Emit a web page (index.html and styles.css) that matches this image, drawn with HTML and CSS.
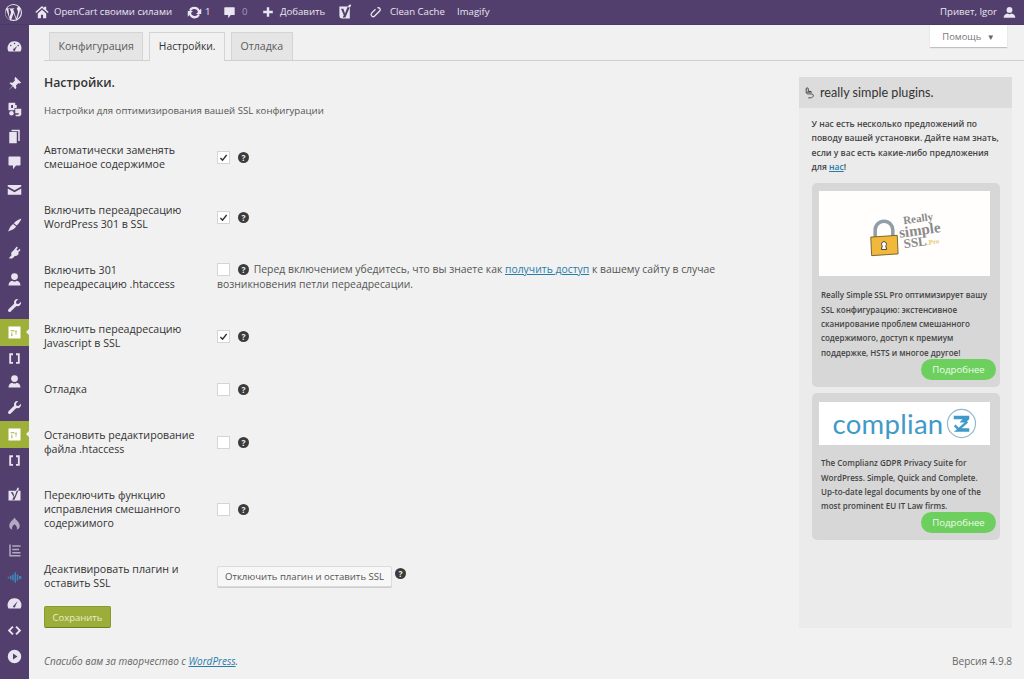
FILE: index.html
```html
<!DOCTYPE html>
<html lang="ru">
<head>
<meta charset="utf-8">
<title>Настройки</title>
<link rel="stylesheet" href="styles.css">
</head>
<body>
<header class="adminbar">
  <div class="bar-left">
    <svg class="ic wp" viewBox="0 0 20 20"><path fill-rule="evenodd" d="M10 1a9 9 0 1 0 0 18 9 9 0 0 0 0-18zm0 1a8 8 0 0 1 5.4 2.1c-1.300-.1-2.200 1.200-1.700 2.400.4.900 1 1.600 1 3 0 1-.4 2.100-.8 3.400l-1 3.200-3.300-9.800.9-.1c.4-.1.4-.7 0-.6l-2.600.1-2.500-.1c-.5 0-.5.6-.1.600l.9.1 1.300 3.500-1.800 5.500L4.600 6.100l1-.1c.4-.1.400-.7 0-.6l-2.300.1A8 8 0 0 1 10 2zM2.400 7.200l3.900 10.700A8 8 0 0 1 2.400 7.200zm7.700 3.400l2.400 6.600.1.100a8 8 0 0 1-4.900.1zm6.700-4.300a8 8 0 0 1-2.900 10.600l2.400-7c.4-1.100.6-2.100.5-3.600z"/></svg>
    <svg class="ic home" viewBox="0 0 20 20"><path d="M10 1.500L0.500 10l1.300 1.400L10 4.200l8.200 7.200 1.300-1.400L16 6.900V2.500h-3v1.800zM4 12v7h4.500v-5h3v5H16v-7l-6-5.200z"/></svg>
    <span class="site">OpenCart своими силами</span>
    <svg class="ic upd" viewBox="0 0 20 20"><path d="M10 2.500a7.500 7.500 0 0 1 6.700 4.100L19 4.500V12h-7l2.700-2.600A5 5 0 0 0 5.300 8L2.800 6.900A7.500 7.500 0 0 1 10 2.500zM1 8h7l-2.700 2.600a5 5 0 0 0 9.400 1.400l2.500 1.100a7.500 7.500 0 0 1-13.900.3L1 15.500z"/></svg>
    <span class="num">1</span>
    <svg class="ic cmt" viewBox="0 0 20 20"><path d="M3 2h14a1 1 0 0 1 1 1v10a1 1 0 0 1-1 1h-5l-4 5v-5H3a1 1 0 0 1-1-1V3a1 1 0 0 1 1-1z"/></svg>
    <span class="num dim">0</span>
    <svg class="ic plus" viewBox="0 0 20 20"><path d="M8 2h4v6h6v4h-6v6H8v-6H2V8h6z"/></svg>
    <span class="add">Добавить</span>
    <svg class="ic yoast" viewBox="0 0 20 20"><path d="M3 3h11l1-2h3l-2 4v13H6a3 3 0 0 1-3-3z"/><path class="yv" d="M5 6h3l2 6 3-8h3l-5.500 13H7l1.500-3z"/></svg>
    <svg class="ic clip" viewBox="0 0 20 20"><path d="M13 3a3 3 0 0 1 4 4l-9 9a3 3 0 0 1-4-1 3 3 0 0 1 0-4l6-6" fill="none" stroke="currentColor" stroke-width="2"/></svg>
    <span class="cache">Clean Cache</span>
    <span class="imagify">Imagify</span>
  </div>
  <div class="bar-right">
    <span>Привет, Igor</span>
    <svg class="ic user" viewBox="0 0 20 20"><circle cx="10" cy="6" r="4.500"/><path d="M1 18c0-4 3-6 6-6.500 2 1.500 4 1.500 6 0 3 .5 6 2.500 6 6.500z"/></svg>
  </div>
</header>

<div class="shell">
  <nav class="menu">
    <div class="mi"><svg viewBox="0 0 20 20"><path fill-rule="evenodd" d="M10 3a9 9 0 0 0-8 13.500h16A9 9 0 0 0 10 3zm0 2a1 1 0 1 1 0 2 1 1 0 0 1 0-2zM5 7.500a1 1 0 1 1 0 2 1 1 0 0 1 0-2zm10 0a1 1 0 1 1 0 2 1 1 0 0 1 0-2zm-1 1.500l-3 4.500a1.500 1.500 0 1 1-1.500-.7z"/></svg></div>
    <div class="mi sep"><svg viewBox="0 0 20 20"><path d="M11 1l8 8-2.500 1-1.500-.5-3 3 .5 3.500-1.500 1.500-3-4-6 5.500 5.500-6-4-3L4 8.500l3.500.5 3-3L10 3.500z"/></svg></div>
    <div class="mi"><svg viewBox="0 0 20 20"><path fill-rule="evenodd" d="M3 1h8v3h2v4h-3v3H2V2a1 1 0 0 1 1-1zm2.500 3v4h2.500V4zM11 9h8v8l-2 2h-5l-1-2h4l1-2h-5z"/><circle cx="6" cy="15" r="3"/></svg></div>
    <div class="mi"><svg viewBox="0 0 20 20"><path d="M6 1h11v15h-2V3H6z"/><path d="M3 4h10v15H3z"/></svg></div>
    <div class="mi"><svg viewBox="0 0 20 20"><path d="M3 2h14a1 1 0 0 1 1 1v10a1 1 0 0 1-1 1h-5l-4 5v-5H3a1 1 0 0 1-1-1V3a1 1 0 0 1 1-1z"/></svg></div>
    <div class="mi"><svg viewBox="0 0 20 20"><path d="M1 4h18v2l-9 5-9-5z"/><path d="M1 8.500l9 5 9-5V17H1z"/></svg></div>
    <div class="mi sep"><svg viewBox="0 0 20 20"><path d="M19 1c0 2-3 6-6 9L9 7c3-3 8-6 10-6zM8 8l4 3-1 2c-2 2-5 3-10 5 2-2 2-5 4-7z"/></svg></div>
    <div class="mi"><svg viewBox="0 0 20 20"><path d="M13 2l1.500 1.500-2 2.500 2 1.500L16.500 5 18 6.500l-3 3.500.5 1c0 2-2 4-5 3.500L7 18l-4 0 0-1 3-3.500C5 11 6 9 8 8z"/></svg></div>
    <div class="mi"><svg viewBox="0 0 20 20"><circle cx="10" cy="6" r="4.500"/><path d="M2 18c0-4 2-6 5-6.500 2 1.500 4 1.500 6 0 3 .5 5 2.500 5 6.500z"/></svg></div>
    <div class="mi"><svg viewBox="0 0 20 20"><path d="M14 1.500a4.500 4.500 0 0 0-4.500 6L2 15a2 2 0 0 0 3 3l7.500-7.500a4.500 4.500 0 0 0 6-5.500L15.500 8 12.500 7.500 12 4.500l3-3z"/></svg></div>
    <div class="mi on"><svg viewBox="0 0 20 20"><path fill-rule="evenodd" d="M2 2h16v16H2zm3 5v1.200h5V7zm7 0l-1.500 2h1v4h1V9h1zM6 10v3H5l1.500 2L8 13H7v-3z"/></svg></div>
    <div class="mi"><svg viewBox="0 0 20 20"><path d="M3 3h5v2.500H5.500v9H8V17H3zM12 3h5v14h-5v-2.500h2.500v-9H12z"/></svg></div>
    <div class="mi tight"><svg viewBox="0 0 20 20"><circle cx="10" cy="6" r="4.500"/><path d="M2 18c0-4 2-6 5-6.500 2 1.500 4 1.500 6 0 3 .5 5 2.500 5 6.500z"/></svg></div>
    <div class="mi"><svg viewBox="0 0 20 20"><path d="M14 1.500a4.500 4.500 0 0 0-4.500 6L2 15a2 2 0 0 0 3 3l7.500-7.500a4.500 4.500 0 0 0 6-5.500L15.500 8 12.500 7.500 12 4.500l3-3z"/></svg></div>
    <div class="mi on"><svg viewBox="0 0 20 20"><path fill-rule="evenodd" d="M2 2h16v16H2zm3 5v1.200h5V7zm7 0l-1.500 2h1v4h1V9h1zM6 10v3H5l1.500 2L8 13H7v-3z"/></svg></div>
    <div class="mi"><svg viewBox="0 0 20 20"><path d="M3 3h5v2.500H5.500v9H8V17H3zM12 3h5v14h-5v-2.500h2.500v-9H12z"/></svg></div>
    <div class="mi sep-low"><svg viewBox="0 0 20 20"><path d="M2 5h10l2-4h2l-1 4h3v13H2z"/><path class="mv" d="M5 7h3l2 6 3-8h2l-5 12H7l2-4z"/></svg></div>
    <div class="mi wide"><svg class="dimmed" viewBox="0 0 20 20"><path d="M10 2c1 3 7 6 7 11 0 3-2 5-4 5 1-2 0-5-3-7-3 2-4 5-3 7-2 0-4-2-4-5 0-5 6-8 7-11z"/></svg></div>
    <div class="mi"><svg class="dimmed" viewBox="0 0 20 20"><path d="M3 2h2v16H3zM7 3h11v2H7zM7 7.500h9v2H7zM7 12h11v2H7zM5 16h13v2H5z"/></svg></div>
    <div class="mi"><svg class="blue" viewBox="0 0 20 20"><path d="M1 9h2v2H1zM4 7.500h2v5H4zM7 6h2v8H7zM10 3h2v14h-2zM13 6h2v8h-2zM16 8h3v4h-3z"/></svg></div>
    <div class="mi"><svg viewBox="0 0 20 20"><path fill-rule="evenodd" d="M10 3a9 9 0 0 0-8 13.500h16A9 9 0 0 0 10 3zm4 4l-3 6.500a1.500 1.500 0 1 1-2-1z"/></svg></div>
    <div class="mi"><svg viewBox="0 0 20 20"><path d="M7 4l1.800 1.800L4.600 10l4.200 4.200L7 16l-6-6zM13 4l6 6-6 6-1.800-1.800 4.200-4.200-4.200-4.200z"/></svg></div>
    <div class="mi"><svg viewBox="0 0 20 20"><path fill-rule="evenodd" d="M10 1a9 9 0 1 0 0 18 9 9 0 0 0 0-18zM8 6l6 4-6 4z"/></svg></div>
  </nav>

  <main class="content">
    <div class="topline">
      <div class="tabs">
        <a class="tab">Конфигурация</a>
        <a class="tab active">Настройки.</a>
        <a class="tab">Отладка</a>
      </div>
      <button class="help">Помощь <span class="caret">▼</span></button>
    </div>

    <div class="columns">
      <section class="settings">
        <h2>Настройки.</h2>
        <p class="lead">Настройки для оптимизирования вашей SSL конфигурации</p>
        <table class="form">
          <tr>
            <th>Автоматически заменять смешаное содержимое</th>
            <td><span class="cb"><svg viewBox="0 0 14 14"><path d="M3 7.500l2.800 2.800L11 3.800" /></svg></span><span class="q">?</span></td>
          </tr>
          <tr>
            <th>Включить переадресацию WordPress 301 в SSL</th>
            <td><span class="cb"><svg viewBox="0 0 14 14"><path d="M3 7.500l2.800 2.800L11 3.800" /></svg></span><span class="q">?</span></td>
          </tr>
          <tr class="r3">
            <th>Включить 301 переадресацию .htaccess</th>
            <td><span class="cb"></span><span class="q">?</span><span class="note"> Перед включением убедитесь, что вы знаете как <a href="#">получить доступ</a> к вашему сайту в случае возникновения петли переадресации.</span></td>
          </tr>
          <tr>
            <th>Включить переадресацию Javascript в SSL</th>
            <td><span class="cb"><svg viewBox="0 0 14 14"><path d="M3 7.500l2.800 2.800L11 3.800" /></svg></span><span class="q">?</span></td>
          </tr>
          <tr>
            <th>Отладка</th>
            <td><span class="cb"></span><span class="q">?</span></td>
          </tr>
          <tr>
            <th>Остановить редактирование файла .htaccess</th>
            <td><span class="cb"></span><span class="q">?</span></td>
          </tr>
          <tr>
            <th>Переключить функцию исправления смешанного содержимого</th>
            <td><span class="cb"></span><span class="q">?</span></td>
          </tr>
          <tr>
            <th>Деактивировать плагин и оставить SSL</th>
            <td><button class="secondary">Отключить плагин и оставить SSL</button><span class="q up">?</span></td>
          </tr>
        </table>
        <button class="save">Сохранить</button>
      </section>

      <aside class="panel">
        <div class="panel-head">
          <svg class="rsp" viewBox="0 0 14 18"><path d="M3 8V4a1.500 1.500 0 0 1 3 0v3.500h4M3 8.500h8M3 8.500c0 1.500 1 2.500 3 2.500h4c2 0 3 1 3 2.500S11 16.500 9 16.500H6" fill="none" stroke="currentColor" stroke-width="1.200"/></svg>
          <span>really simple plugins.</span>
        </div>
        <p class="intro">У нас есть несколько предложений по поводу вашей установки. Дайте нам знать, если у вас есть какие-либо предложения для <a href="#">нас</a>!</p>
        <article class="card">
          <div class="art art-ssl">
            <svg class="lock" viewBox="0 0 34 42"><path d="M7 20V12a10 10 0 0 1 20 0v9" fill="none" stroke="#8f9ea8" stroke-width="4"/><path d="M2 20l30-2 1 21-30 2z" fill="#f2b83c" stroke="#6b5a2a" stroke-width="1"/><path d="M17 25a3 3 0 0 1 2 5l1 4h-6l1-4a3 3 0 0 1 2-5z" fill="#fff" stroke="#333" stroke-width="1"/></svg>
            <div class="ssl-text"><span class="l1">Really</span><span class="l2">simple</span><span class="l3">SSL<i>.Pro</i></span></div>
          </div>
          <p>Really Simple SSL Pro оптимизирует вашу SSL конфигурацию: экстенсивное сканирование проблем смешанного содержимого, доступ к премиум поддержке, HSTS и многое другое!</p>
          <button class="more">Подробнее</button>
        </article>
        <article class="card second">
          <div class="art art-cz">
            <span class="cz">complian</span>
            <svg class="czmark" viewBox="0 0 32 32"><circle cx="16" cy="16" r="14.500" fill="none" stroke="#8fb8cf" stroke-width="1.200"/><path d="M8 8h16v3.500L20 15h-6l3-3.500H8zM13 21h11v3.500H8z" fill="#3f9ac9"/><path d="M9 18l4 4 9-8" fill="none" stroke="#3f9ac9" stroke-width="2.500"/></svg>
          </div>
          <p>The Complianz GDPR Privacy Suite for WordPress. Simple, Quick and Complete. Up-to-date legal documents by one of the most prominent EU IT Law firms.</p>
          <button class="more">Подробнее</button>
        </article>
      </aside>
    </div>

    <footer class="foot">
      <em>Спасибо вам за творчество с <a href="#">WordPress</a>.</em>
      <span>Версия 4.9.8</span>
    </footer>
  </main>
</div>
</body>
</html>
```

FILE: styles.css
```css
* { box-sizing: border-box; }
html, body { margin: 0; padding: 0; }
body {
  width: 1024px;
  height: 679px;
  overflow: hidden;
  background: #f1f1f1;
  color: #444;
  font-family: "Open Sans", sans-serif;
  font-size: 10.4px;
  line-height: 14px;
  display: flex;
  flex-direction: column;
}
a { color: #2a7ca8; text-decoration: underline; }
button { font-family: inherit; cursor: default; }

/* admin bar */
.adminbar {
  flex: 0 0 25px;
  height: 25px;
  background: #523f6d;
  color: #eae6ef;
  display: flex;
  justify-content: space-between;
  align-items: center;
  padding: 0 8px 0 4px;
  font-size: 9.600px;
  border-bottom: 1px solid #4b3965;
}
.bar-left, .bar-right { display: flex; align-items: center; }
.ic { fill: currentColor; display: block; flex: none; }
.wp { width: 19px; height: 19px; margin-right: 12px; }
.home { width: 14px; height: 14px; margin-right: 5px; }
.site { width: 119px; white-space: nowrap; }
.upd { width: 15px; height: 15px; margin-left: 14px; margin-right: 3px; }
.num { width: 9px; }
.num.dim { color: #a99dba; }
.cmt { width: 13px; height: 13px; margin-left: 9px; margin-right: 6px; }
.plus { width: 12px; height: 12px; margin-left: 11px; margin-right: 6px; }
.add { width: 45px; white-space: nowrap; }
.yoast { width: 16px; height: 16px; margin-left: 12px; }
.yv { fill: #523f6d; }
.clip { width: 13px; height: 13px; margin-left: 16px; margin-right: 8px; }
.cache { width: 55px; white-space: nowrap; }
.imagify { margin-left: 12px; }
.bar-right span { margin-right: 6px; }
.user { width: 13px; height: 13px; }

.shell { flex: 1; display: flex; min-height: 0; }

/* side menu */
.menu {
  flex: 0 0 28.500px;
  background: #523f6d;
  padding-top: 8.500px;
  color: #e8e3ee;
}
.mi {
  height: 26.600px;
  display: flex;
  align-items: center;
  padding-left: 6.500px;
  position: relative;
}
.mi svg { width: 15px; height: 15px; fill: currentColor; display: block; }
.mi .mv { fill: #523f6d; }
.mi.sep { margin-top: 9.800px; }
.mi.sep-low { margin-top: 7.500px; }
.mi.tight { margin-top: -4.500px; }
.mi.wide { margin-top: 2.500px; }
.mi.on { background: #9fb03a; color: #fff; }
.mi.on::after {
  content: "";
  position: absolute;
  right: 0;
  top: 50%;
  margin-top: -3px;
  border: 3px solid transparent;
  border-right-color: #f1f1f1;
  border-left-width: 0;
}
.mi .dimmed { fill: #b3a9c1; }
.mi .blue { fill: #3f86b8; }

/* content */
.content { flex: 1; min-width: 0; display: flex; flex-direction: column; }
.topline {
  height: 36px;
  display: flex;
  justify-content: space-between;
  align-items: flex-start;
  border-bottom: 1px solid #d0d0d0;
  margin-left: 15.500px;
  padding-left: 5px;
  padding-right: 17px;
}
.tabs { display: flex; gap: 6px; padding-top: 7px; }
.tab {
  display: block;
  height: 28px;
  padding: 0 8.500px;
  background: #e5e5e5;
  border: 1px solid #d4d4d4;
  border-bottom: 0;
  color: #5a5a5a;
  font-size: 10.600px;
  font-weight: 500;
  line-height: 27px;
  text-decoration: none;
}
.tab.active {
  background: #f1f1f1;
  color: #333;
  height: 29px;
  position: relative;
  z-index: 1;
  font-size: 10.300px;
}
.help {
  width: 77px;
  height: 22px;
  background: #fff;
  border: 0;
  box-shadow: 0 1px 1px rgba(0,0,0,.2);
  color: #777;
  font-size: 9.400px;
  padding: 0;
}
.caret { font-size: 8px; margin-left: 3px; color: #666; }

.columns { display: flex; padding: 13px 12px 0 15.500px; }
.settings { width: 755px; flex: none; }
h2 {
  margin: 0;
  font-size: 12.300px;
  font-weight: 600;
  line-height: 18px;
  color: #333;
}
.lead { margin: 12px 0 0; font-size: 9.600px; line-height: 14px; color: #555; height: 23px; }

.form { border-collapse: collapse; width: 700px; table-layout: fixed; }
.form th {
  width: 173px;
  padding: 16px 20px 16px 0;
  text-align: left;
  vertical-align: top;
  font-size: 10.650px;
  font-weight: 500;
  line-height: 14px;
  color: #333;
}
.form td {
  padding: 15px 0;
  vertical-align: middle;
  font-size: 10.400px;
  line-height: 15px;
  color: #555;
}
.form .r3 th { padding-bottom: 15px; }
.form .r3 td { padding: 14.500px 0; }
.cb {
  display: inline-block;
  width: 13px;
  height: 13px;
  background: #fff;
  border: 1px solid #d5d5d5;
  vertical-align: middle;
}
.cb svg { display: block; width: 11px; height: 11px; fill: none; stroke: #333; stroke-width: 1.800; }
.q {
  display: inline-block;
  width: 11px;
  height: 11px;
  margin-left: 8px;
  border-radius: 50%;
  background: #3b3b3b;
  color: #f1f1f1;
  font-size: 8.500px;
  font-weight: 700;
  line-height: 11px;
  text-align: center;
  vertical-align: middle;
}
.q.up { margin-left: 3px; position: relative; top: -3px; }
.note { font-size: 10.400px; margin-left: 2px; }
.secondary {
  width: 175px;
  height: 21px;
  background: #f7f7f7;
  border: 1px solid #dcdcdc;
  border-radius: 2px;
  box-shadow: 0 1px 0 #ccc;
  color: #555;
  font-size: 9.600px;
  padding: 0;
  vertical-align: middle;
}
.save {
  display: block;
  width: 67px;
  height: 22px;
  background: #9cad3a;
  border: 1px solid #8a9a30;
  border-bottom-color: #6f7d24;
  border-radius: 2px;
  color: #e9eed0;
  font-size: 9.500px;
  padding: 0;
}

/* side panel */
.panel {
  width: 213px;
  height: 551px;
  flex: none;
  background: #ebebeb;
  margin-left: auto;
  margin-top: 3px;
  padding-bottom: 10px;
}
.panel-head {
  height: 31px;
  background: #dcdcdc;
  display: flex;
  align-items: center;
  padding-left: 5px;
  color: #333;
  font-family: "Lato", sans-serif;
  font-size: 12.600px;
}
.rsp { width: 10px; height: 13px; margin-right: 6px; color: #333; }
.intro {
  margin: 9px 12px 0 12.500px;
  font-size: 8.530px;
  font-weight: 600;
  line-height: 14.300px;
  color: #444;
}
.intro a { color: #2a7ca8; }
.card {
  margin: 9px 12px 0 13px;
  padding: 8px 10px 0 7px;
  height: 204px;
  background: #d7d7d7;
  border-radius: 5px;
  position: relative;
}
.card.second { height: 147px; margin-top: 6px; }
.card p {
  margin: 12px 0 0;
  padding-left: 2px;
  font-size: 8px;
  font-weight: 600;
  line-height: 14.400px;
  color: #444;
}
.card.second p { margin-top: 11px; }
.art { width: 171px; background: #fffefc; display: flex; align-items: center; justify-content: center; }
.art-ssl { height: 85px; }
.art-cz { height: 43px; background: #fff; margin-top: 1px; }
.lock { width: 30px; height: 38px; margin-top: 8px; }
.ssl-text {
  display: flex;
  flex-direction: column;
  align-items: center;
  font-family: "Liberation Serif", serif;
  font-weight: 700;
  color: #8a8a8a;
  line-height: 12px;
  margin-left: 0;
  transform: translateY(-3px) rotate(-8deg);
}
.l1 { font-size: 11px; }
.l2 { font-size: 15px; }
.l3 { font-size: 13px; }
.l3 i { font-size: 7px; color: #e8c87a; font-style: normal; }
.cz {
  font-family: "Lato", sans-serif;
  font-size: 27.500px;
  line-height: 36px;
  color: #3f9ac9;
  letter-spacing: .3px;
}
.czmark { width: 31px; height: 31px; margin-left: 2px; flex: none; }
.more {
  position: absolute;
  right: 4px;
  bottom: 7px;
  width: 75px;
  height: 21px;
  background: #6ccf5e;
  border: 0;
  border-radius: 11px;
  color: #eefbea;
  font-size: 9.600px;
  padding: 0;
}

.foot {
  display: flex;
  justify-content: space-between;
  padding: 0 12px 0 15.500px;
  margin-top: 26px;
  font-size: 10px;
  color: #666;
}
```
